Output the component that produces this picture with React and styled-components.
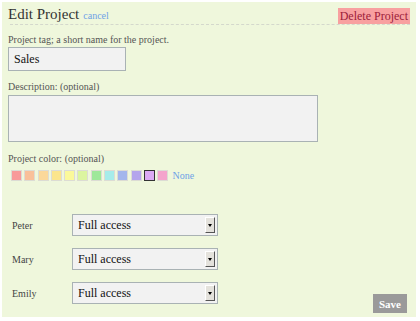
import React from "react";
import styled, { createGlobalStyle } from "styled-components";

const Global = createGlobalStyle`
  html, body { margin: 0; padding: 0; background: #fff; }
  body { font-family: "Liberation Serif", "Times New Roman", serif; }
`;

const Panel = styled.div`
  margin: 2px 4px 0 2px;
  height: 315px;
  background: #eff7dc;
  position: relative;
  box-sizing: border-box;
  padding: 5px 6px 0 6px;
`;

const Header = styled.div`
  display: flex;
  justify-content: space-between;
  align-items: flex-end;
  border-bottom: 1px dashed #d4d8cc;
  margin: 0 0 0 2px;
  height: 17px;
`;

const Title = styled.h1`
  margin: 0 0 0 -2px;
  font-size: 15px;
  font-weight: normal;
  color: #333;
  line-height: 17px;
`;

const Cancel = styled.a`
  font-size: 10px;
  color: #6ea2e6;
  margin-left: 4px;
  text-decoration: none;
`;

const DeleteButton = styled.button`
  border: none;
  background: #f8a0a0;
  color: #9c1c3a;
  font-family: inherit;
  font-size: 12px;
  line-height: 16px;
  padding: 0 2px;
  height: 16px;
  margin-bottom: 0;
  cursor: pointer;
`;

const Label = styled.div`
  font-size: 10px;
  line-height: 12px;
  color: #555;
  margin-top: ${(p) => p.$top}px;
  margin-bottom: ${(p) => p.$bottom}px;
`;

const TextInput = styled.div`
  width: 118px;
  height: 24px;
  box-sizing: border-box;
  border: 1px solid #a9b2b4;
  background: #f2f2f2;
  font-size: 12px;
  color: #111;
  padding: 0 5px;
  display: flex;
  align-items: center;
`;

const TextArea = styled.div`
  width: 310px;
  height: 47px;
  box-sizing: border-box;
  border: 1px solid #a9b2b4;
  background: #f2f2f2;
`;

const Swatches = styled.div`
  display: flex;
  align-items: center;
  gap: 2.3px;
  margin: 5px 0 0 3px;
`;

const Swatch = styled.span`
  width: 11px;
  height: 11px;
  box-sizing: border-box;
  background: ${(p) => p.$c};
  border: 1px solid ${(p) => (p.$sel ? "#333" : "#dcdcd4")};
  display: inline-block;
`;

const NoneLink = styled.a`
  font-size: 10px;
  color: #6ea2e6;
  margin-left: 2px;
`;

const Members = styled.div`
  margin-top: 33px;
  display: flex;
  flex-direction: column;
  gap: 12px;
`;

const Row = styled.div`
  display: flex;
  align-items: center;
`;

const Name = styled.span`
  width: 64px;
  box-sizing: border-box;
  padding-left: 4px;
  font-size: 10px;
  color: #444;
`;

const Select = styled.div`
  position: relative;
  width: 146px;
  height: 22px;
  box-sizing: border-box;
  border: 1px solid #a9b2b4;
  background: #f2f2f2;
  font-size: 12px;
  color: #111;
  padding-left: 5px;
  display: flex;
  align-items: center;
`;

const Arrow = styled.span`
  position: absolute;
  right: 2px;
  top: 2px;
  width: 10px;
  height: 16px;
  box-sizing: border-box;
  background: #e4e2dc;
  border: 1px solid #fff;
  border-right-color: #555;
  border-bottom-color: #555;
  display: flex;
  align-items: center;
  justify-content: center;
  &::after {
    content: "";
    border-left: 2.5px solid transparent;
    border-right: 2.5px solid transparent;
    border-top: 3px solid #000;
  }
`;

const SaveButton = styled.button`
  position: absolute;
  right: 9px;
  bottom: 4px;
  width: 34px;
  height: 19px;
  border: none;
  background: #9a9a9a;
  color: #fff;
  font-family: inherit;
  font-weight: bold;
  font-size: 11px;
  padding: 0;
`;

const colors = [
  "#f89a9a", "#f9c09a", "#fbd89a", "#fbe58c", "#fbf99a", "#dcf5a0",
  "#9ee89a", "#a6ecea", "#a4b6ec", "#b4a4ec", "#dcaaf4", "#f4a4cc",
];

const members = ["Peter", "Mary", "Emily"];

export default function App() {
  return (
    <>
      <Global />
      <Panel>
        <Header>
          <Title>
            Edit Project<Cancel href="#">cancel</Cancel>
          </Title>
          <DeleteButton>Delete Project</DeleteButton>
        </Header>
        <Label $top={9} $bottom={1}>Project tag; a short name for the project.</Label>
        <TextInput>Sales</TextInput>
        <Label $top={10} $bottom={2}>Description: (optional)</Label>
        <TextArea />
        <Label $top={11} $bottom={0}>Project color: (optional)</Label>
        <Swatches>
          {colors.map((c, i) => (
            <Swatch key={i} $c={c} $sel={i === 10} />
          ))}
          <NoneLink>None</NoneLink>
        </Swatches>
        <Members>
          {members.map((m) => (
            <Row key={m}>
              <Name>{m}</Name>
              <Select>
                Full access
                <Arrow />
              </Select>
            </Row>
          ))}
        </Members>
        <SaveButton>Save</SaveButton>
      </Panel>
    </>
  );
}
